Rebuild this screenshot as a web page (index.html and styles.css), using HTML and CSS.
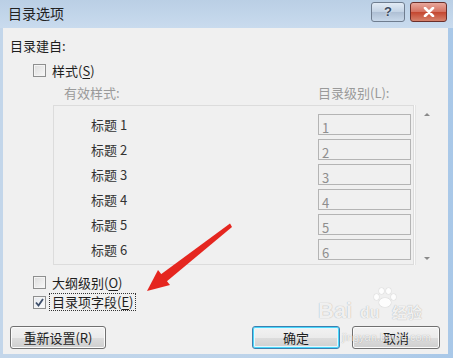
FILE: index.html
```html
<!DOCTYPE html>
<html lang="zh-CN">
<head>
  <meta charset="UTF-8">
  <title>目录选项</title>
  <link rel="stylesheet" href="styles.css">
</head>
<body>
  <div class="window">
    <div class="titlebar">
      <span class="title">目录选项</span>
      <div class="caption-btns">
        <span class="cap-btn help">?</span>
        <span class="cap-btn close">
          <svg width="14" height="10" viewBox="0 0 14 10"><path d="M3 1 L11 9 M11 1 L3 9" stroke="#fff" stroke-width="2.6" stroke-linecap="round"/></svg>
        </span>
      </div>
    </div>

    <div class="client">
      <div class="group-title">目录建自:</div>
      <div class="check-row"><span class="checkbox"></span><span>样式(<u>S</u>)</span></div>

      <div class="col-heads">
        <span>有效样式:</span>
        <span>目录级别(L):</span>
      </div>

      <div class="list-wrap">
        <div class="list">
          <div class="row"><span class="style-name">标题 1</span><span class="level">1</span></div>
          <div class="row"><span class="style-name">标题 2</span><span class="level">2</span></div>
          <div class="row"><span class="style-name">标题 3</span><span class="level">3</span></div>
          <div class="row"><span class="style-name">标题 4</span><span class="level">4</span></div>
          <div class="row"><span class="style-name">标题 5</span><span class="level">5</span></div>
          <div class="row"><span class="style-name">标题 6</span><span class="level">6</span></div>
        </div>
        <div class="scroll">
          <span class="tri up"></span>
          <span class="tri down"></span>
        </div>
      </div>

      <div class="check-row outline"><span class="checkbox"></span><span>大纲级别(<u>O</u>)</span></div>
      <div class="check-row field">
        <span class="checkbox checked">
          <svg width="11" height="11" viewBox="0 0 11 11"><path d="M2 5.5 L4.5 8.5 L9 2" fill="none" stroke="#3d4e6a" stroke-width="1.8"/></svg>
        </span>
        <span class="focus">目录项字段(<u>E</u>)</span>
      </div>

      <div class="buttons">
        <button class="btn reset">重新设置(R)</button>
        <button class="btn ok">确定</button>
        <button class="btn cancel">取消</button>
      </div>
    </div>

    <svg class="pointer" width="453" height="358" viewBox="0 0 453 358">
      <polygon points="230,223.5 232,227 166,282 160,275" fill="#e5261f"/>
      <polygon points="147,291 158,270 170,285" fill="#e5261f"/>
    </svg>

    <div class="watermark">
      <span class="paw">
        <i class="toe t1"></i><i class="toe t2"></i><i class="toe t3"></i><i class="toe t4"></i><i class="pad"></i>
      </span>
      <span class="wm-brand">Bai</span><span class="wm-du">du</span><span class="wm-cn">经验</span>
      <span class="wm-url">jingyan.baidu.com</span>
    </div>
  </div>
</body>
</html>
```

FILE: styles.css
```css
body {
  margin: 0;
  font-family: "Noto Sans CJK SC", "Liberation Sans", sans-serif;
  font-size: 13px;
  color: #1e1e1e;
}

.window {
  position: relative;
  width: 453px;
  height: 358px;
  display: flex;
  flex-direction: column;
  background: linear-gradient(to right, #c3d6ea, #bcd3ea 60%, #a9c8e8);
  overflow: hidden;
}

/* title bar */
.titlebar {
  height: 28px;
  display: flex;
  align-items: center;
  justify-content: space-between;
  padding: 0 6px 0 8px;
  background: linear-gradient(#bacfe5, #c9dbee);
}
.title {
  font-size: 14px;
  color: #222;
  margin-top: -2px;
}
.caption-btns {
  display: flex;
  gap: 5px;
  margin-top: -5px;
}
.cap-btn {
  height: 18px;
  border: 1px solid #6f7d8f;
  border-radius: 3px;
  display: flex;
  align-items: center;
  justify-content: center;
}
.help {
  width: 32px;
  background: linear-gradient(#e2ebf5, #c2d2e4 50%, #aebfd4 51%, #c8d8ea);
  color: #3b4b60;
  font-family: "Liberation Sans", sans-serif;
  font-weight: bold;
  font-size: 13px;
  text-shadow: 0 0 2px #fff;
}
.close {
  width: 35px;
  border-color: #6b2f2a;
  background: linear-gradient(#e8a79c, #d4705f 50%, #c4462f 51%, #d6826c);
}

/* client area */
.client {
  flex: 1;
  margin: 0 5px 4px 3px;
  padding: 9px 8px 0 7px;
  background: #f0f0f0;
}
.group-title {
  line-height: 18px;
}
.check-row {
  display: flex;
  align-items: center;
  height: 18px;
  padding-left: 23px;
  margin-top: 6px;
  gap: 6px;
}
.checkbox {
  width: 11px;
  height: 11px;
  border: 1px solid #8e8f8f;
  background: linear-gradient(135deg, #dcdcdc, #f8f8f8);
  box-shadow: inset 0 0 0 1px #f4f4f4;
  display: flex;
  align-items: center;
  justify-content: center;
}
.checked {
  background: linear-gradient(135deg, #e4e8ee, #fbfbfb);
}
u {
  text-decoration-thickness: 1px;
  text-underline-offset: 2px;
}

.col-heads {
  display: grid;
  grid-template-columns: 254px auto;
  padding-left: 54px;
  margin-top: 5px;
  line-height: 18px;
  color: #9a9a9a;
}

.list-wrap {
  display: flex;
  margin: 3px 0 0 43px;
}
.list {
  width: 364px;
  height: 150px;
  border: 1px solid #dcdcdc;
  box-shadow: 1px 0 0 #fafafa, 2px 0 0 #e4e4e4;
  padding-top: 8px;
  display: flex;
  flex-direction: column;
  gap: 4px;
}
.row {
  display: flex;
  align-items: center;
  height: 21px;
  padding-left: 37px;
}
.style-name {
  width: 227px;
  color: #333;
}
.level {
  box-sizing: border-box;
  width: 93px;
  height: 21px;
  border: 1px solid #b4b4b4;
  padding: 4px 0 0 3px;
  line-height: 17px;
  color: #8e8e8e;
}
.scroll {
  width: 26px;
  display: flex;
  flex-direction: column;
  align-items: center;
  justify-content: space-between;
  padding: 8px 0 5px;
}
.tri {
  width: 0;
  height: 0;
  border-left: 3px solid transparent;
  border-right: 3px solid transparent;
}
.tri.up {
  border-bottom: 3px solid #8a8a8a;
}
.tri.down {
  border-top: 3px solid #8a8a8a;
}

.check-row.outline {
  margin-top: 8px;
}
.check-row.field {
  margin-top: 2px;
  gap: 3px;
}
.focus {
  border: 1px dotted #333;
  padding: 0 2px;
  line-height: 16px;
}

/* bottom buttons */
.buttons {
  display: flex;
  margin-top: 15px;
}
.btn {
  height: 23px;
  padding: 0;
  font-family: inherit;
  font-size: 13px;
  color: #1e1e1e;
  border: 1px solid #707070;
  border-radius: 3px;
  background: linear-gradient(#f2f2f2, #ebebeb 50%, #dddddd 51%, #cfcfcf);
  box-shadow: inset 0 0 0 1px #fbfbfb;
}
.reset {
  width: 96px;
}
.ok {
  width: 88px;
  margin-left: auto;
  border-color: #3c7fb1;
  box-shadow: inset 0 0 0 1px #48d8fb, inset 0 0 0 2px #e6f6fd;
}
.cancel {
  width: 88px;
  margin-left: 12px;
}

/* overlays */
.pointer {
  position: absolute;
  left: 0;
  top: 0;
  pointer-events: none;
}
.watermark {
  position: absolute;
  left: 316px;
  top: 288px;
  width: 120px;
  height: 60px;
  color: rgba(255, 255, 255, 0.85);
  text-shadow: 0 0 1px rgba(0, 0, 0, 0.35);
  pointer-events: none;
}
.wm-brand {
  position: absolute;
  left: 2px;
  top: 10px;
  font-family: "Liberation Sans", sans-serif;
  font-weight: bold;
  font-size: 22px;
}
.wm-du {
  position: absolute;
  left: 44px;
  top: 16px;
  font-family: "Liberation Sans", sans-serif;
  font-weight: bold;
  font-size: 16px;
}
.wm-cn {
  position: absolute;
  left: 76px;
  top: 13px;
  font-size: 15px;
  font-weight: bold;
}
.wm-url {
  position: absolute;
  left: 26px;
  top: 43px;
  font-family: "Liberation Sans", sans-serif;
  font-size: 11px;
}
.paw {
  position: absolute;
  left: 58px;
  top: 0;
  width: 22px;
  height: 22px;
}
.paw i {
  position: absolute;
  background: rgba(255, 255, 255, 0.85);
  box-shadow: 0 0 1px rgba(0, 0, 0, 0.35);
  border-radius: 50%;
}
.toe {
  width: 5px;
  height: 6px;
}
.t1 { left: 0; top: 6px; }
.t2 { left: 5px; top: 0; }
.t3 { left: 12px; top: 0; }
.t4 { left: 17px; top: 6px; }
.pad {
  left: 5px;
  top: 10px;
  width: 12px;
  height: 9px;
}
```
